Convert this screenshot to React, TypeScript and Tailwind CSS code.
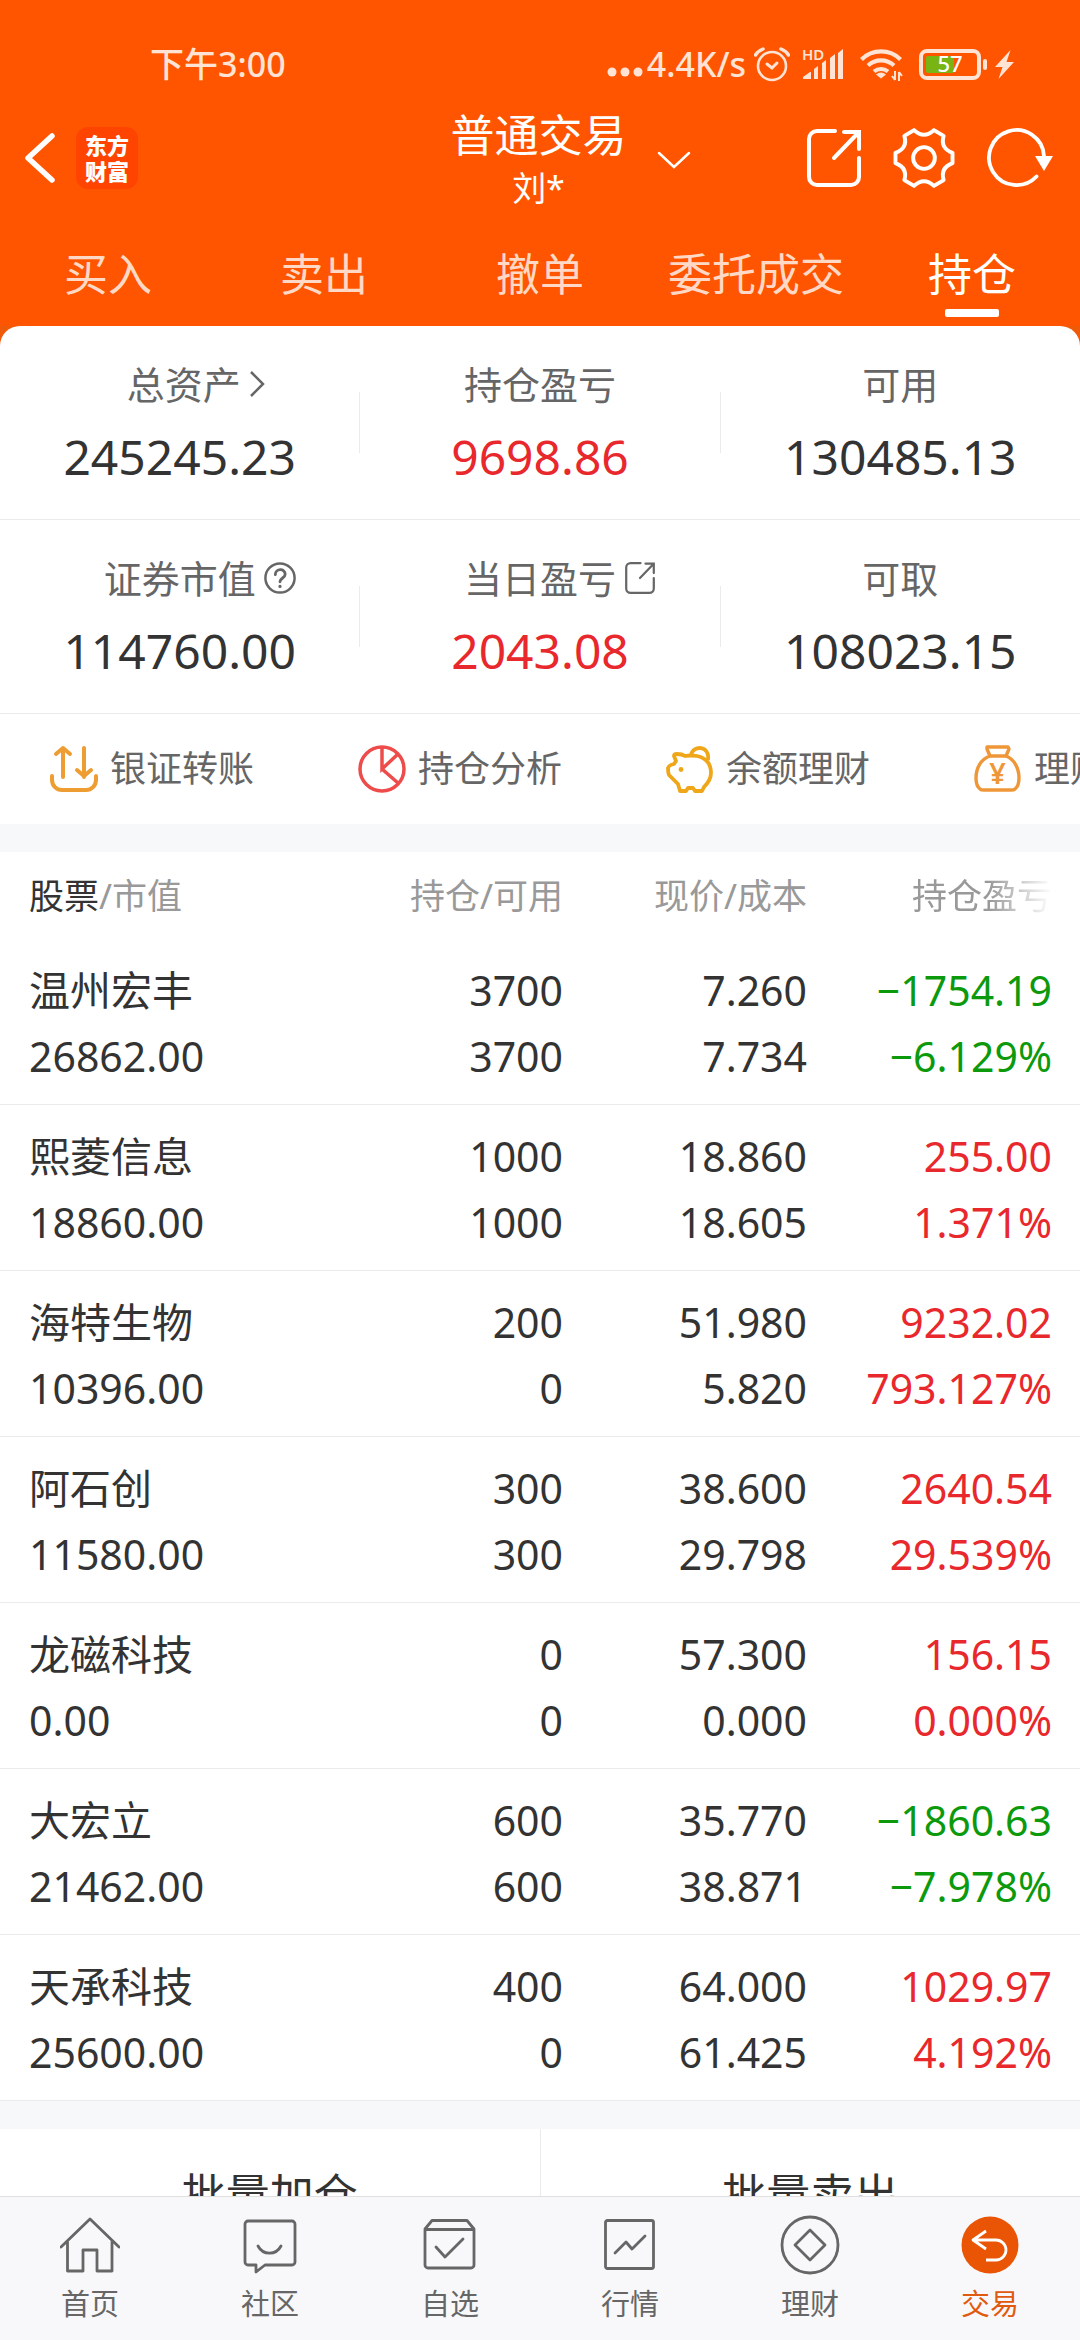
import type { ReactNode } from "react"
import clsx from "clsx"

interface Holding {
  name: string
  value: string
  amount: string
  available: string
  price: string
  cost: string
  profit: string
  rate: string
}

interface Stat {
  label: string
  value: string
  red?: boolean
  icon?: ReactNode
}

const HOLDINGS: Holding[] = [
  { name: "温州宏丰", value: "26862.00", amount: "3700", available: "3700", price: "7.260", cost: "7.734", profit: "−1754.19", rate: "−6.129%" },
  { name: "熙菱信息", value: "18860.00", amount: "1000", available: "1000", price: "18.860", cost: "18.605", profit: "255.00", rate: "1.371%" },
  { name: "海特生物", value: "10396.00", amount: "200", available: "0", price: "51.980", cost: "5.820", profit: "9232.02", rate: "793.127%" },
  { name: "阿石创", value: "11580.00", amount: "300", available: "300", price: "38.600", cost: "29.798", profit: "2640.54", rate: "29.539%" },
  { name: "龙磁科技", value: "0.00", amount: "0", available: "0", price: "57.300", cost: "0.000", profit: "156.15", rate: "0.000%" },
  { name: "大宏立", value: "21462.00", amount: "600", available: "600", price: "35.770", cost: "38.871", profit: "−1860.63", rate: "−7.978%" },
  { name: "天承科技", value: "25600.00", amount: "400", available: "0", price: "64.000", cost: "61.425", profit: "1029.97", rate: "4.192%" },
]

const TABS = ["买入", "卖出", "撤单", "委托成交", "持仓"]

// --- ICONS ---
function ShareIcon({ className, strokeWidth = 4 }: { className?: string; strokeWidth?: number }) {
  return (
    <svg viewBox="0 0 54 58" className={className} fill="none" stroke="currentColor" strokeWidth={strokeWidth} strokeLinecap="round" aria-hidden="true">
      <path d="M28 2H10a8 8 0 0 0-8 8v38a8 8 0 0 0 8 8h34a8 8 0 0 0 8-8V29" />
      <path d="M37 3h15v17M51 4 27 29" />
    </svg>
  )
}

function StatusBar() {
  return (
    <div className="flex h-12 items-center justify-between pl-[150px] pr-[66px] text-[34px] font-medium text-[#ffe3d5]">
      <span>下午3:00</span>
      <div className="flex items-center">
        <svg viewBox="0 0 36 10" className="mt-4 mr-1 w-9" fill="currentColor" aria-hidden="true">
          <circle cx="5" cy="5" r="4.5" />
          <circle cx="18" cy="5" r="4.5" />
          <circle cx="31" cy="5" r="4.5" />
        </svg>
        <span>4.4K/s</span>
        <svg viewBox="0 0 36 35" className="ml-2 w-9" fill="none" stroke="currentColor" strokeWidth="2.6" strokeLinecap="round" aria-hidden="true">
          <circle cx="18" cy="19" r="14" />
          <path d="m13 17 5 4 5-5" strokeWidth="3" />
          <path d="M1.5 8Q4 4 9 2M34.5 8Q32 4 27 2" strokeWidth="3.5" />
        </svg>
        <svg viewBox="0 0 42 36" className="ml-3 w-[42px] overflow-visible" fill="currentColor" aria-hidden="true">
          <text x="0" y="14" fontSize="15" fontWeight="600">HD</text>
          <path d="M1 33v-2l7-5h1v7zM12 33V23l4-3v13zM20 33V17l4-3v19zM28 33V12l5-4v25zM36 33V7l5-4v30z" />
        </svg>
        <svg viewBox="0 0 43 34" className="ml-4 w-[43px]" fill="none" stroke="currentColor" strokeWidth="4.2" aria-hidden="true">
          <path d="M1.5 12.5a27.5 27.5 0 0 1 39 0M8 18.5a19 19 0 0 1 26 0M14 24.5a11 11 0 0 1 14 0" />
          <path d="M21 31.5l-5-4q5-4 10 0z" fill="currentColor" stroke="none" />
          <path d="M35 24v9m0 0-3-4M39 34v-9m0 0 3 4" strokeWidth="2" />
        </svg>
        <svg viewBox="0 0 68 31" className="ml-4 w-[68px]" aria-hidden="true">
          <rect x="2" y="2" width="58" height="27" rx="6" fill="none" stroke="currentColor" strokeWidth="4" />
          <rect x="64" y="10" width="4" height="11" rx="2" fill="currentColor" />
          <rect x="7" y="7" width="28" height="17" rx="2" fill="#78b414" />
          <text x="31" y="23" fontSize="22" fontWeight="500" textAnchor="middle" fill="#fff">57</text>
        </svg>
        <svg viewBox="0 0 19 29" className="ml-2 w-[19px]" fill="currentColor" aria-hidden="true">
          <path d="M15.5 0 0 17h7.5L3.5 29 19 12h-7.5z" />
        </svg>
      </div>
    </div>
  )
}

function TopBar() {
  return (
    <div className="grid h-[140px] grid-cols-[1fr_auto_1fr] items-center pl-6 pr-[27px]">
      <div className="flex items-center gap-[21px]">
        <button aria-label="返回">
          <svg viewBox="0 0 31 50" className="w-[31px]" fill="none" stroke="currentColor" strokeWidth="5.5" strokeLinecap="round" strokeLinejoin="round">
            <path d="M28 3 4 25l24 22" />
          </svg>
        </button>
        <div className="flex h-[62px] w-[62px] flex-col items-center justify-center rounded-xl bg-[#ff4300] text-[22px] leading-[26px] font-black">
          <span>东方</span>
          <span>财富</span>
        </div>
      </div>
      <button className="flex items-center pt-1">
        <span className="flex flex-col">
          <span className="text-[44px] leading-[56px]">普通交易</span>
          <span className="text-[34px] leading-[50px]">刘*</span>
        </span>
        <svg viewBox="0 0 34 18" className="-mr-[64px] ml-[30px] w-[34px]" fill="none" stroke="currentColor" strokeWidth="2.5" strokeLinecap="round" aria-hidden="true">
          <path d="m2 2 15 14L32 2" />
        </svg>
      </button>
      <div className="flex items-center justify-end gap-8">
        <button aria-label="分享">
          <ShareIcon className="w-[54px]" />
        </button>
        <button aria-label="设置">
          <svg viewBox="0 0 60 60" className="w-[62px]" fill="none" stroke="currentColor" strokeWidth="3.8" strokeLinejoin="round">
            <path d="M57.6 25.1Q45.5 20.5 49 8.6L39.6 3Q30 12 20.4 3L11 8.6Q14.5 20.5 2.4 25.1V34.9Q14.5 39.5 11 51.4L20.4 57Q30 48 39.6 57L49 51.4Q45.5 39.5 57.6 34.9Z" />
            <circle cx="30" cy="30" r="10.5" />
          </svg>
        </button>
        <button aria-label="刷新">
          <svg viewBox="0 0 66 60" className="w-[66px]" fill="none" stroke="currentColor" strokeWidth="3.8" strokeLinecap="round">
            <path d="M57 28A27.5 27.5 0 1 0 49.5 48.5" />
            <path d="M48 28h18l-9 15z" fill="currentColor" stroke="none" />
          </svg>
        </button>
      </div>
    </div>
  )
}

const STATS: Stat[][] = [
  [
    {
      label: "总资产",
      value: "245245.23",
      icon: (
        <svg viewBox="0 0 16 28" className="-mr-8 ml-2 w-4" fill="none" stroke="currentColor" strokeWidth="2.5" aria-hidden="true">
          <path d="m2 2 12 12L2 26" />
        </svg>
      ),
    },
    { label: "持仓盈亏", value: "9698.86", red: true },
    { label: "可用", value: "130485.13" },
  ],
  [
    {
      label: "证券市值",
      value: "114760.00",
      icon: (
        <svg viewBox="0 0 34 34" className="-mr-10 ml-2 w-8" fill="none" stroke="currentColor" strokeWidth="2.6" strokeLinecap="round" aria-hidden="true">
          <circle cx="17" cy="17" r="15.5" />
          <path d="M12 13.5c0-7 10.5-7 10.5-.5 0 4-5.5 4-5.5 8" strokeWidth="3" />
          <circle cx="17" cy="26" r="1" fill="currentColor" strokeWidth="1.5" />
        </svg>
      ),
    },
    {
      label: "当日盈亏",
      value: "2043.08",
      red: true,
      icon: <ShareIcon className="-mr-10 ml-2 h-8 w-8" strokeWidth={4} />,
    },
    { label: "可取", value: "108023.15" },
  ],
]

function Summary() {
  return (
    <section>
      {STATS.map((row, i) => (
        <div key={i} className="flex items-center border-b border-[#ebebeb]">
          {row.map((s, j) => (
            <div key={s.label} className="contents">
              {j > 0 && <div className="h-[61px] w-px bg-[#ebebeb]" />}
              <div className="flex flex-1 flex-col items-center pt-8 pb-8">
                <div className="flex items-center text-[38px] leading-[52px] text-[#666]">
                  <span>{s.label}</span>
                  {s.icon}
                </div>
                <div className={clsx("mt-[17px] text-[48px] leading-[60px]", s.red ? "text-[#e8282c]" : "text-[#333]")}>{s.value}</div>
              </div>
            </div>
          ))}
        </div>
      ))}
    </section>
  )
}

const SHORTCUTS = [
  {
    label: "银证转账",
    icon: (
      <svg viewBox="0 0 48 48" className="w-12" fill="none" stroke="#ee9d33" strokeWidth="4" strokeLinecap="round" strokeLinejoin="round" aria-hidden="true">
        <path d="M13 32V3M6 9l7-6 7 6M34 3v29M27 25l7 6 7-6" />
        <path d="M2 31v4a10 10 0 0 0 10 10h24a10 10 0 0 0 10-10v-4" />
      </svg>
    ),
  },
  {
    label: "持仓分析",
    icon: (
      <svg viewBox="0 0 48 48" className="w-12" fill="none" stroke="#ee4b4b" strokeWidth="3.5" aria-hidden="true">
        <circle cx="24" cy="24" r="22" />
        <path d="M24 2v22l16-15M24 24l16 14" />
      </svg>
    ),
  },
  {
    label: "余额理财",
    icon: (
      <svg viewBox="0 0 48 48" className="w-12" fill="none" stroke="#efa618" strokeWidth="3.8" strokeLinejoin="round" aria-hidden="true">
        <path d="M8 11q0-2 3-2 5 0 8 2 6-1 12 0c9 2 14 8 14 17 0 7-4 11-7 14l-2 4h-7l-2-3h-5l-2 3h-6l-2-7-9-9q-1-2-1-7 1-3 6-4l2-3z" />
        <path d="M25 10c2-10 19-10 17 5" />
        <circle cx="15" cy="24.5" r="2.4" fill="#efa618" stroke="none" />
      </svg>
    ),
  },
  {
    label: "理财",
    icon: (
      <svg viewBox="0 0 48 48" className="w-12" fill="none" stroke="#ef9738" strokeWidth="3.4" strokeLinejoin="round" aria-hidden="true">
        <path d="M13 2h21l1 2-3 7H16l-3-7z" />
        <path d="M16 11C7 14 2 23 2 33q0 8 4 11 1 1 4 1h27q3 0 4-1 4-3 4-11c0-10-5-19-13-22" />
        <text x="23.5" y="39" fontSize="29" fontWeight="600" textAnchor="middle" fill="#ef9738" stroke="none">¥</text>
      </svg>
    ),
  },
]

function Shortcuts() {
  return (
    <div className="flex h-[110px] items-center overflow-hidden pl-[50px]">
      {SHORTCUTS.map((s) => (
        <button key={s.label} className="flex w-[308px] shrink-0 items-center gap-3 text-[36px] text-[#666]">
          {s.icon}
          <span className="whitespace-nowrap">{s.label}</span>
        </button>
      ))}
    </div>
  )
}

function HoldingsTable() {
  return (
    <table className="w-full table-fixed text-right text-[41px] leading-[66px] text-[#333]">
      <thead>
        <tr className="h-[87px] text-[35px] text-[#999]">
          <th className="pl-[29px] text-left font-normal">
            <span className="text-[#333]">股票</span>/市值
          </th>
          <th className="w-[238px] font-normal">持仓/可用</th>
          <th className="w-[244px] font-normal">现价/成本</th>
          <th className="w-[273px] pr-7 font-normal">
            <span className="[mask-image:linear-gradient(to_right,black_55%,transparent)]">持仓盈亏</span>
          </th>
        </tr>
      </thead>
      <tbody>
        {HOLDINGS.map((h) => (
          <tr key={h.name} className="border-b border-[#ebebeb]">
            <td className="pt-[18px] pb-[15px] pl-[29px] text-left">
              <div>{h.name}</div>
              <div>{h.value}</div>
            </td>
            <td className="pt-[18px] pb-[15px]">
              <div>{h.amount}</div>
              <div>{h.available}</div>
            </td>
            <td className="pt-[18px] pb-[15px]">
              <div>{h.price}</div>
              <div>{h.cost}</div>
            </td>
            <td className={clsx("pt-[18px] pr-7 pb-[15px]", h.profit.startsWith("−") ? "text-[#0c9a0c]" : "text-[#e8282c]")}>
              <div>{h.profit}</div>
              <div>{h.rate}</div>
            </td>
          </tr>
        ))}
      </tbody>
    </table>
  )
}

const NAV_ITEMS = [
  { label: "首页", icon: <path d="M1 32 30 4l29 28M7.5 27v29H23V35h14v21h15V27" /> },
  {
    label: "社区",
    icon: (
      <>
        <path d="M16 50H8a3 3 0 0 1-3-3V9a3 3 0 0 1 3-3h44a3 3 0 0 1 3 3v38a3 3 0 0 1-3 3H25l-9 7z" />
        <path d="M18 31c5 9.5 18 9.5 23 0" />
      </>
    ),
  },
  {
    label: "自选",
    icon: (
      <>
        <path d="M5 14 12 5.5h35l7 8.5v36a3 3 0 0 1-3 3H8a3 3 0 0 1-3-3zM5 14.5h49" />
        <path d="m16 32 9 10 18-18" />
      </>
    ),
  },
  {
    label: "行情",
    icon: (
      <>
        <rect x="5.5" y="5.5" width="48" height="48" rx="2" />
        <path d="m15 38 11-11 6 7 13-13" />
      </>
    ),
  },
  {
    label: "理财",
    icon: (
      <>
        <circle cx="30" cy="30" r="28" />
        <path d="M30 15 45 30 30 45 15 30z" />
      </>
    ),
  },
  {
    label: "交易",
    active: true,
    icon: (
      <>
        <circle cx="30" cy="30" r="28.5" fill="#e95504" stroke="none" />
        <path d="M26 16 13 25l13 9M13 25h23a10 10 0 0 1 0 20H26" stroke="#fff" strokeLinecap="butt" />
      </>
    ),
  },
]

function BottomNav() {
  return (
    <nav className="flex h-36 shrink-0 border-t border-[#dfdfdf] bg-[#f8f8fa] pt-[18px]">
      {NAV_ITEMS.map((item) => (
        <a key={item.label} href="#" className={clsx("flex flex-1 flex-col items-center text-[29px] leading-[42px]", item.active ? "text-[#e05a10]" : "text-[#666]")}>
          <svg viewBox="0 0 60 60" className="mb-2 w-[60px]" fill="none" stroke="currentColor" strokeWidth="2.8" strokeLinecap="round" strokeLinejoin="round" aria-hidden="true">
            {item.icon}
          </svg>
          {item.label}
        </a>
      ))}
    </nav>
  )
}

export default function App() {
  return (
    <div className="flex h-screen flex-col bg-white font-['Noto_Sans','Noto_Sans_CJK_SC',sans-serif]">
      <header className="shrink-0 bg-[#ff5500] pt-10 text-white">
        <StatusBar />
        <TopBar />
        <div className="flex" role="tablist">
          {TABS.map((tab) => {
            const active = tab === "持仓"
            return (
              <button key={tab} role="tab" aria-selected={active} className={clsx("flex flex-1 basis-0 flex-col items-center pt-[18px] pb-[9px]", !active && "text-[#ffd9c6]")}>
                <span className="text-[44px] leading-[56px]">{tab}</span>
                <span className={clsx("mt-[7px] h-2 w-[54px] rounded-xs", active && "bg-white")} />
              </button>
            )
          })}
        </div>
      </header>

      <main className="min-h-0 flex-1 overflow-y-auto bg-[#f7f8fa] [scrollbar-width:none]">
        <div className="bg-[#ee5a08]">
          <div className="rounded-t-[20px] bg-white">
            <Summary />
            <Shortcuts />
          </div>
        </div>
        <div className="mt-7 bg-white">
          <HoldingsTable />
        </div>
        <div className="mt-7 flex items-center bg-white text-[44px] text-[#333]">
          <button className="h-[130px] flex-1 border-r border-[#ebebeb]">批量加仓</button>
          <button className="h-[130px] flex-1">批量卖出</button>
        </div>
      </main>

      <BottomNav />
    </div>
  )
}
